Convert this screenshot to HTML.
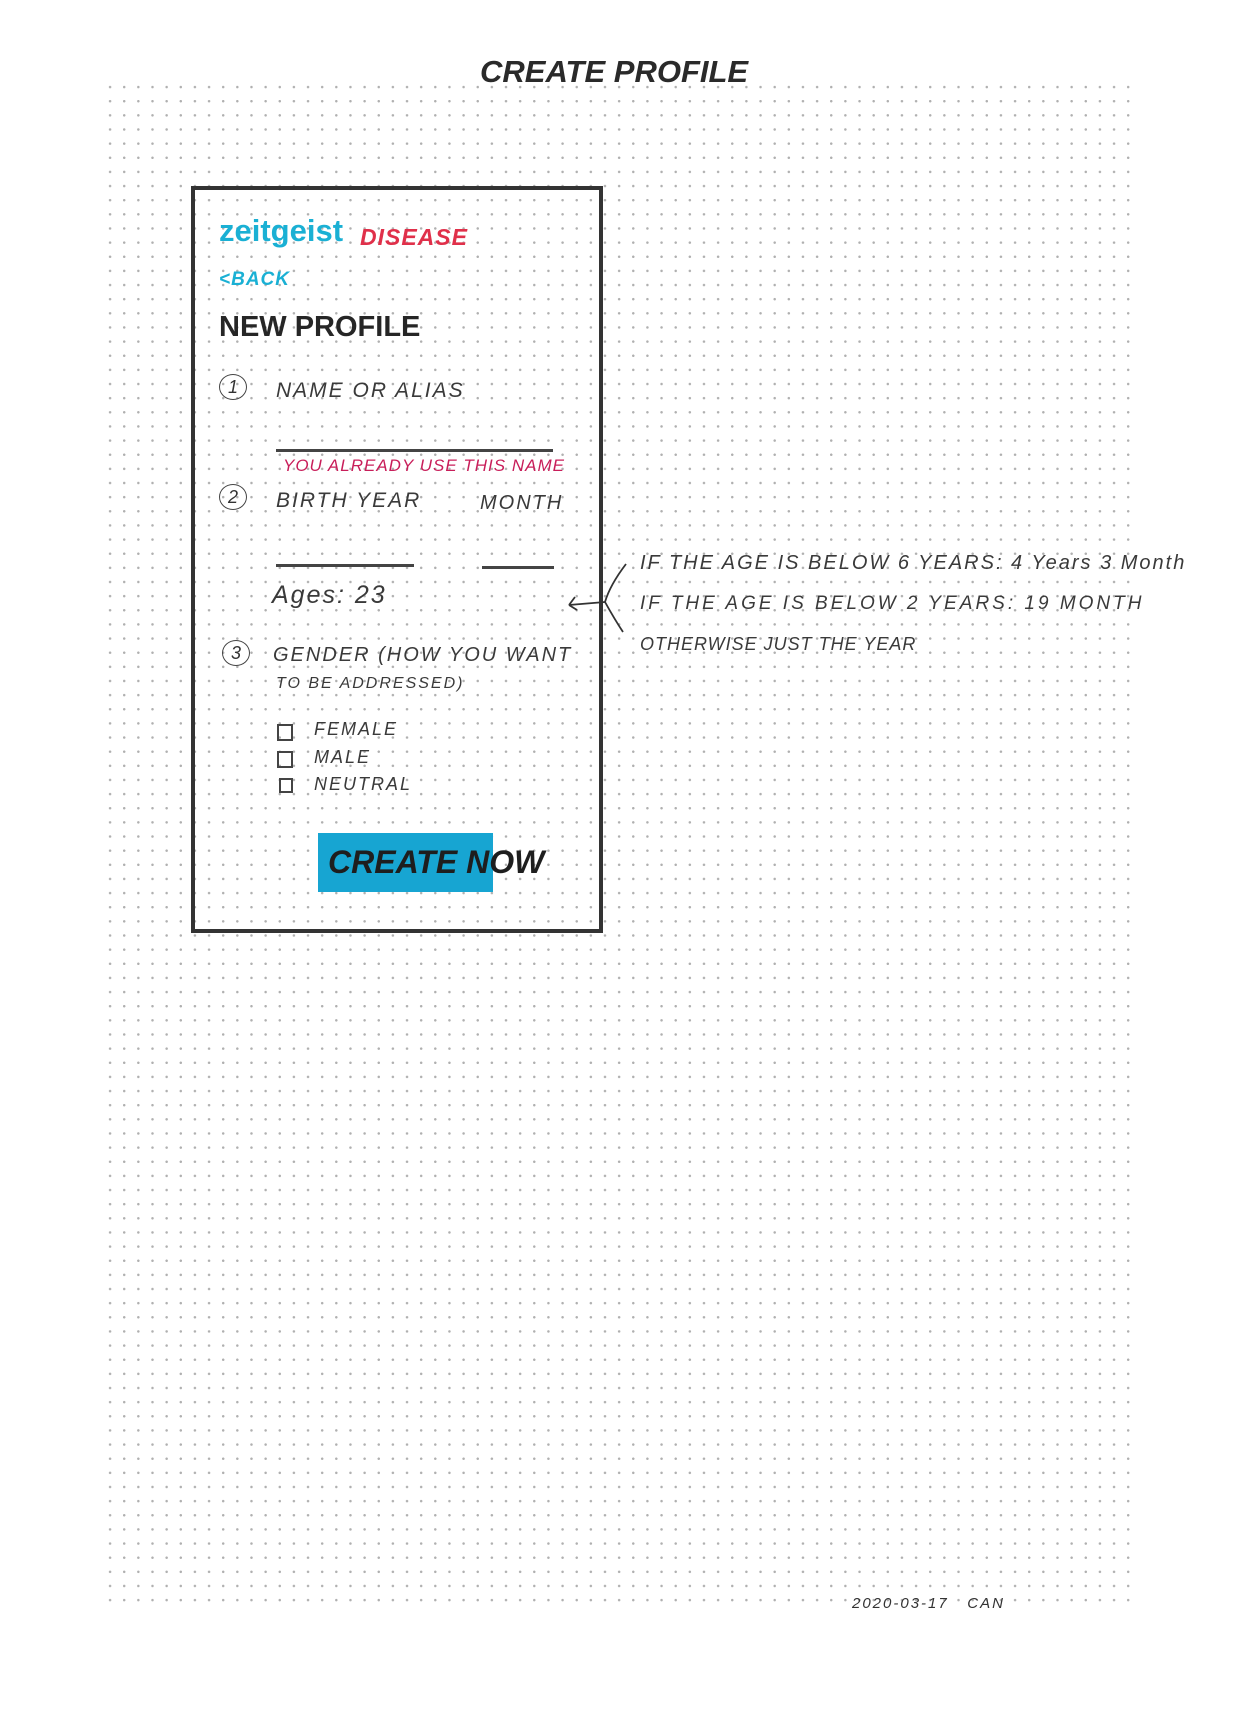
<!DOCTYPE html>
<html><head><meta charset="utf-8"><style>
html,body{margin:0;padding:0}
body{width:1240px;height:1719px;background:#fff;position:relative;overflow:hidden;font-family:"Liberation Sans",sans-serif}
.grid{position:absolute;left:103px;top:80px;width:1035px;height:1527px;background-image:radial-gradient(circle,#b0b0b0 1.1px,transparent 1.4px);background-size:14.15px 14.15px}
.t{position:absolute;white-space:nowrap;line-height:1}
.hw{font-style:italic;color:#3a3a3a;letter-spacing:2px}
.frame{position:absolute;left:191px;top:186px;width:404px;height:739px;border:4px solid #333}
.line{position:absolute;height:2px;background:#444}
.circ{position:absolute;width:26px;height:24px;border:1.5px solid #444;border-radius:50%;font-style:italic;font-size:18px;text-align:center;line-height:24px;color:#333}
.cb{position:absolute;width:12px;height:13px;border:2px solid #444}
</style></head><body>
<div class="grid"></div>
<div class="t" style="left:480px;top:56px;font-size:31px;font-weight:bold;font-style:italic;color:#2a2a2a;letter-spacing:0px">CREATE PROFILE</div>
<div class="frame"></div>
<div class="t" style="left:219px;top:215px;font-size:31px;font-weight:bold;color:#1ab0d4">zeitgeist</div>
<div class="t" style="left:360px;top:226px;font-size:23px;font-weight:bold;font-style:italic;color:#e0304a;letter-spacing:1px">DISEASE</div>
<div class="t" style="left:219px;top:270px;font-size:19px;font-weight:bold;font-style:italic;color:#1ab0d4;letter-spacing:1px">&lt;BACK</div>
<div class="t" style="left:219px;top:313px;font-size:29px;font-weight:bold;color:#262626">NEW PROFILE</div>
<div class="circ" style="left:219px;top:374px">1</div>
<div class="t hw" style="left:276px;top:380px;font-size:21px">NAME OR ALIAS</div>
<div class="line" style="left:276px;top:449px;width:277px;height:3px"></div>
<div class="t" style="left:283px;top:457px;font-size:17px;font-style:italic;color:#c81e5a;letter-spacing:1px">YOU ALREADY USE THIS NAME</div>
<div class="circ" style="left:219px;top:484px">2</div>
<div class="t hw" style="left:276px;top:490px;font-size:21px">BIRTH YEAR</div>
<div class="t hw" style="left:480px;top:493px;font-size:20px">MONTH</div>
<div class="line" style="left:276px;top:564px;width:138px;height:3px"></div>
<div class="line" style="left:482px;top:566px;width:72px;height:3px"></div>
<div class="t hw" style="left:272px;top:583px;font-size:25px">Ages: 23</div>
<div class="circ" style="left:222px;top:640px">3</div>
<div class="t hw" style="left:273px;top:645px;font-size:20px">GENDER (HOW YOU WANT</div>
<div class="t hw" style="left:276px;top:676px;font-size:16px">TO BE ADDRESSED)</div>
<div class="cb" style="left:277px;top:724px"></div>
<div class="t hw" style="left:314px;top:720px;font-size:18px">FEMALE</div>
<div class="cb" style="left:277px;top:751px"></div>
<div class="t hw" style="left:314px;top:748px;font-size:18px">MALE</div>
<div class="cb" style="left:279px;top:778px;width:10px;height:11px"></div>
<div class="t hw" style="left:314px;top:775px;font-size:18px">NEUTRAL</div>
<div style="position:absolute;left:318px;top:833px;width:175px;height:59px;background:#17a5d2"></div>
<div class="t" style="left:328px;top:846px;font-size:32px;font-weight:bold;font-style:italic;color:#1e1e1e">CREATE NOW</div>
<svg style="position:absolute;left:565px;top:560px" width="80" height="110"><path d="M61 4 Q45 25 40 42 Q50 60 58 72" stroke="#333" stroke-width="1.8" fill="none"/><path d="M12 50 L4 45 M4 45 L10 37 M4 45 L40 42" stroke="#333" stroke-width="1.8" fill="none"/></svg>
<div class="t hw" style="left:640px;top:553px;font-size:20px;letter-spacing:2px">IF THE AGE IS BELOW 6 YEARS: 4 Years 3 Month</div>
<div class="t hw" style="left:640px;top:594px;font-size:19px;letter-spacing:3px">IF THE AGE IS BELOW 2 YEARS: 19 MONTH</div>
<div class="t hw" style="left:640px;top:635px;font-size:18px;letter-spacing:1px">OTHERWISE JUST THE YEAR</div>
<div class="t" style="left:852px;top:1596px;font-size:15px;font-style:italic;color:#333;letter-spacing:2px">2020-03-17 &nbsp; CAN</div>
</body></html>
